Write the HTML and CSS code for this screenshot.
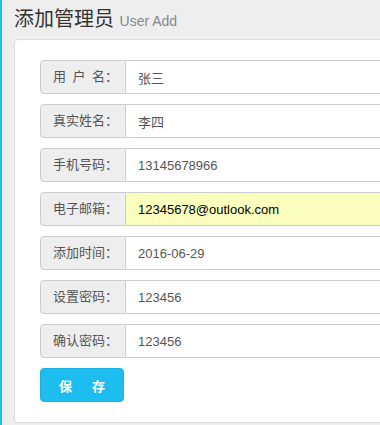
FILE: index.html
```html
<!DOCTYPE html>
<html lang="zh-CN">
<head>
    <meta charset="UTF-8">
    <title>添加管理员</title>
    <link rel="stylesheet" href="styles.css">
</head>
<body>
    <div class="page">
        <h1 class="title">添加管理员 <small>User Add</small></h1>

        <div class="panel">
            <form class="admin-form">
                <div class="row">
                    <label class="label">用&ensp;户&ensp;名：</label>
                    <input class="field" type="text" value="张三">
                </div>
                <div class="row">
                    <label class="label">真实姓名：</label>
                    <input class="field" type="text" value="李四">
                </div>
                <div class="row">
                    <label class="label">手机号码：</label>
                    <input class="field" type="text" value="13145678966">
                </div>
                <div class="row">
                    <label class="label">电子邮箱：</label>
                    <input class="field field-fill" type="text" value="12345678@outlook.com">
                </div>
                <div class="row">
                    <label class="label">添加时间：</label>
                    <input class="field" type="text" value="2016-06-29">
                </div>
                <div class="row">
                    <label class="label">设置密码：</label>
                    <input class="field" type="text" value="123456">
                </div>
                <div class="row">
                    <label class="label">确认密码：</label>
                    <input class="field" type="text" value="123456">
                </div>
                <button class="btn-save" type="submit">保<span class="gap"></span>存</button>
            </form>
        </div>
    </div>
</body>
</html>
```

FILE: styles.css
```css
html, body {
    margin: 0;
    height: 100%;
    overflow: hidden;
}

body {
    background: #eeeeee;
    font-family: "Liberation Sans", "Noto Sans CJK SC", sans-serif;
    color: #333;
}

.page {
    border-left: 2px solid #1ebdf0;
    height: 100%;
    box-sizing: border-box;
    padding: 8px 0 0 12px;
}

.title {
    margin: 0 0 7px 0;
    font-size: 20px;
    font-weight: normal;
    line-height: 22px;
    color: #333;
    white-space: nowrap;
}

.title small {
    font-size: 14px;
    color: #888;
}

.panel {
    background: #fff;
    border: 1px solid #ddd;
    border-radius: 4px;
    width: 420px;
    padding: 20px 0 20px 25px;
}

.admin-form {
    display: flex;
    flex-direction: column;
    gap: 10px;
}

.row {
    display: flex;
    height: 34px;
}

.label {
    width: 86px;
    flex: none;
    box-sizing: border-box;
    background: #eee;
    border: 1px solid #ccc;
    border-radius: 4px 0 0 4px;
    padding-left: 12px;
    font-size: 13px;
    color: #555;
    line-height: 32px;
    white-space: nowrap;
}

.field {
    flex: 1;
    height: 34px;
    box-sizing: border-box;
    border: 1px solid #ccc;
    border-left: none;
    padding: 0 12px;
    font-family: "Liberation Sans", "Noto Sans CJK SC", sans-serif;
    font-size: 13px;
    color: #555;
    outline: none;
}

.field-fill {
    background: #faffbd;
    color: #000;
}

.btn-save {
    width: 84px;
    height: 34px;
    background: #1ebdf0;
    border: 1px solid #18b0e0;
    border-radius: 4px;
    color: #fff;
    font-size: 13px;
    font-weight: bold;
    font-family: "Liberation Sans", "Noto Sans CJK SC", sans-serif;
    padding: 0;
    cursor: pointer;
}

.btn-save .gap {
    display: inline-block;
    width: 20px;
}
```
